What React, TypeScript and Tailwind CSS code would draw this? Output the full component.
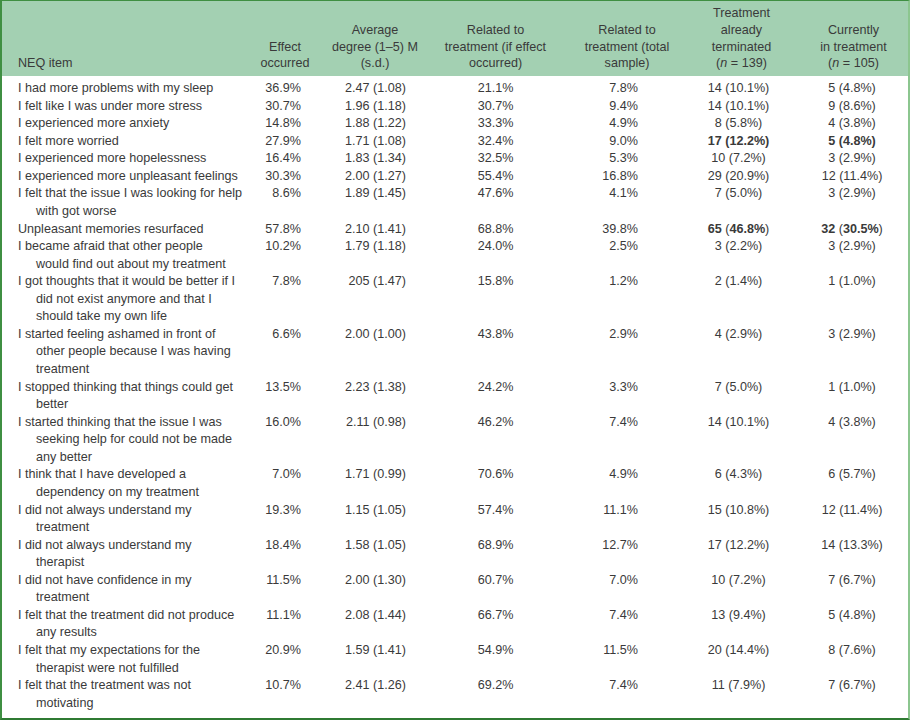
import React from "react";

type Row = {
  item: string[];
  c1: string;
  c2: string;
  c3: string;
  c4: string;
  c5: React.ReactNode;
  c6: React.ReactNode;
};

const rows: Row[] = [
  { item: ["I had more problems with my sleep"], c1: "36.9%", c2: "2.47 (1.08)", c3: "21.1%", c4: "7.8%", c5: "14 (10.1%)", c6: "5 (4.8%)" },
  { item: ["I felt like I was under more stress"], c1: "30.7%", c2: "1.96 (1.18)", c3: "30.7%", c4: "9.4%", c5: "14 (10.1%)", c6: "9 (8.6%)" },
  { item: ["I experienced more anxiety"], c1: "14.8%", c2: "1.88 (1.22)", c3: "33.3%", c4: "4.9%", c5: "8 (5.8%)", c6: "4 (3.8%)" },
  { item: ["I felt more worried"], c1: "27.9%", c2: "1.71 (1.08)", c3: "32.4%", c4: "9.0%", c5: <span className="font-bold">17 (12.2%)</span>, c6: <span className="font-bold">5 (4.8%)</span> },
  { item: ["I experienced more hopelessness"], c1: "16.4%", c2: "1.83 (1.34)", c3: "32.5%", c4: "5.3%", c5: "10 (7.2%)", c6: "3 (2.9%)" },
  { item: ["I experienced more unpleasant feelings"], c1: "30.3%", c2: "2.00 (1.27)", c3: "55.4%", c4: "16.8%", c5: "29 (20.9%)", c6: "12 (11.4%)" },
  { item: ["I felt that the issue I was looking for help", "with got worse"], c1: "8.6%", c2: "1.89 (1.45)", c3: "47.6%", c4: "4.1%", c5: "7 (5.0%)", c6: "3 (2.9%)" },
  { item: ["Unpleasant memories resurfaced"], c1: "57.8%", c2: "2.10 (1.41)", c3: "68.8%", c4: "39.8%", c5: <span><span className="font-bold">65</span> (<span className="font-bold">46.8%</span>)</span>, c6: <span><span className="font-bold">32</span> (<span className="font-bold">30.5%</span>)</span> },
  { item: ["I became afraid that other people", "would find out about my treatment"], c1: "10.2%", c2: "1.79 (1.18)", c3: "24.0%", c4: "2.5%", c5: "3 (2.2%)", c6: "3 (2.9%)" },
  { item: ["I got thoughts that it would be better if I", "did not exist anymore and that I", "should take my own life"], c1: "7.8%", c2: "205 (1.47)", c3: "15.8%", c4: "1.2%", c5: "2 (1.4%)", c6: "1 (1.0%)" },
  { item: ["I started feeling ashamed in front of", "other people because I was having", "treatment"], c1: "6.6%", c2: "2.00 (1.00)", c3: "43.8%", c4: "2.9%", c5: "4 (2.9%)", c6: "3 (2.9%)" },
  { item: ["I stopped thinking that things could get", "better"], c1: "13.5%", c2: "2.23 (1.38)", c3: "24.2%", c4: "3.3%", c5: "7 (5.0%)", c6: "1 (1.0%)" },
  { item: ["I started thinking that the issue I was", "seeking help for could not be made", "any better"], c1: "16.0%", c2: "2.11 (0.98)", c3: "46.2%", c4: "7.4%", c5: "14 (10.1%)", c6: "4 (3.8%)" },
  { item: ["I think that I have developed a", "dependency on my treatment"], c1: "7.0%", c2: "1.71 (0.99)", c3: "70.6%", c4: "4.9%", c5: "6 (4.3%)", c6: "6 (5.7%)" },
  { item: ["I did not always understand my", "treatment"], c1: "19.3%", c2: "1.15 (1.05)", c3: "57.4%", c4: "11.1%", c5: "15 (10.8%)", c6: "12 (11.4%)" },
  { item: ["I did not always understand my", "therapist"], c1: "18.4%", c2: "1.58 (1.05)", c3: "68.9%", c4: "12.7%", c5: "17 (12.2%)", c6: "14 (13.3%)" },
  { item: ["I did not have confidence in my", "treatment"], c1: "11.5%", c2: "2.00 (1.30)", c3: "60.7%", c4: "7.0%", c5: "10 (7.2%)", c6: "7 (6.7%)" },
  { item: ["I felt that the treatment did not produce", "any results"], c1: "11.1%", c2: "2.08 (1.44)", c3: "66.7%", c4: "7.4%", c5: "13 (9.4%)", c6: "5 (4.8%)" },
  { item: ["I felt that my expectations for the", "therapist were not fulfilled"], c1: "20.9%", c2: "1.59 (1.41)", c3: "54.9%", c4: "11.5%", c5: "20 (14.4%)", c6: "8 (7.6%)" },
  { item: ["I felt that the treatment was not", "motivating"], c1: "10.7%", c2: "2.41 (1.26)", c3: "69.2%", c4: "7.4%", c5: "11 (7.9%)", c6: "7 (6.7%)" },
];

export default function App() {
  return (
    <div
      className="w-[910px] h-[720px] bg-white border-l-2 border-t border-b-2 border-r-2 border-l-[#3f8f42] border-t-[#3f8f42] border-b-[#2f7a33] border-r-[#8cc68f] text-[#3a3a3a] text-[12.6px]"
      style={{ fontFamily: '"Liberation Sans", Arial, sans-serif' }}
    >
      <table className="table-fixed border-collapse w-[906px]">
        <colgroup>
          <col className="w-[248px]" />
          <col className="w-[70px]" />
          <col className="w-[110px]" />
          <col className="w-[131px]" />
          <col className="w-[120px]" />
          <col className="w-[115px]" />
          <col className="w-[112px]" />
        </colgroup>
        <thead>
          <tr className="h-[75px] bg-[#a3d0b2] leading-[16.7px] font-normal">
            <th className="align-bottom text-left font-normal pl-4 pb-[4px] whitespace-nowrap">NEQ item</th>
            <th className="align-bottom text-center font-normal pb-[4px] whitespace-nowrap">Effect<br />occurred</th>
            <th className="align-bottom text-center font-normal pb-[4px] whitespace-nowrap">Average<br />degree (1–5) M<br />(s.d.)</th>
            <th className="align-bottom text-center font-normal pb-[4px] whitespace-nowrap">Related to<br />treatment (if effect<br />occurred)</th>
            <th className="align-bottom text-center font-normal pl-3 pb-[4px] whitespace-nowrap">Related to<br />treatment (total<br />sample)</th>
            <th className="align-bottom text-center font-normal pl-[6px] pb-[4px] whitespace-nowrap">Treatment<br />already<br />terminated<br />(<i>n</i> = 139)</th>
            <th className="align-bottom text-center font-normal pl-[3px] pb-[4px] whitespace-nowrap">Currently<br />in treatment<br />(<i>n</i> = 105)</th>
          </tr>
        </thead>
        <tbody className="leading-[17.56px]">
          {rows.map((r, i) => {
            const pt = i === 0 ? "pt-[4px]" : "";
            return (
              <tr key={i}>
                <td className={`align-top pl-4 whitespace-nowrap ${pt}`}>
                  {r.item.map((l, j) => (
                    <div key={j} className={j > 0 ? "pl-[18px]" : ""}>{l}</div>
                  ))}
                </td>
                <td className={`align-top text-right pr-[19px] whitespace-nowrap ${pt}`}>{r.c1}</td>
                <td className={`align-top text-right pr-[24px] whitespace-nowrap ${pt}`}>{r.c2}</td>
                <td className={`align-top text-center whitespace-nowrap ${pt}`}>{r.c3}</td>
                <td className={`align-top text-right pr-[43px] whitespace-nowrap ${pt}`}>{r.c4}</td>
                <td className={`align-top text-center whitespace-nowrap ${pt}`}>{r.c5}</td>
                <td className={`align-top text-center whitespace-nowrap ${pt}`}>{r.c6}</td>
              </tr>
            );
          })}
        </tbody>
      </table>
    </div>
  );
}
